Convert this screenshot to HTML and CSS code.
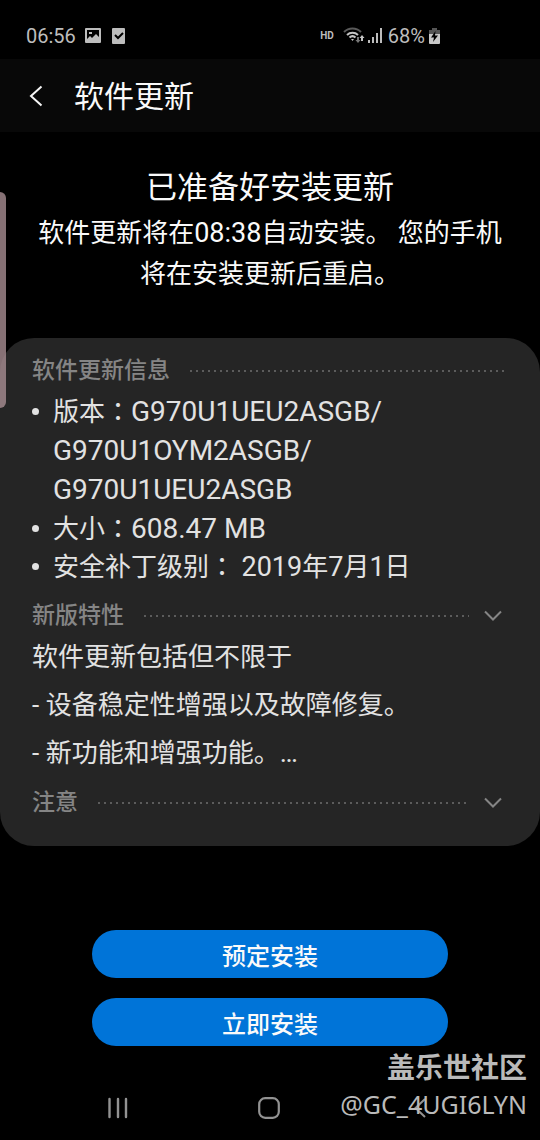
FILE: index.html
```html
<!DOCTYPE html>
<html lang="zh-CN">
<head>
<meta charset="utf-8">
<meta name="viewport" content="width=device-width, initial-scale=1">
<title>软件更新</title>
<link rel="stylesheet" href="styles.css">
</head>
<body>
<div class="screen">
  <div class="status">
    <span class="clock">06:56</span>
    <svg class="s-photo" width="16" height="16" viewBox="0 0 16 16"><path fill="#bdbdbd" fill-rule="evenodd" d="M1 0h14a1 1 0 0 1 1 1v13a1 1 0 0 1-1 1H1a1 1 0 0 1-1-1V1a1 1 0 0 1 1-1zM2 2v9l3-3 2 2 4-4 3 3V2zM4 4h3v2H4z"/></svg>
    <svg class="s-check" width="13" height="16" viewBox="0 0 13 16"><rect width="13" height="16" rx="1" fill="#bdbdbd"/><path d="M3 7l3 3 5-5" fill="none" stroke="#000" stroke-width="2"/></svg>
    <span class="hd">HD</span>
    <svg class="s-wifi" width="22" height="17" viewBox="0 0 22 17"><g fill="none" stroke-width="2"><path stroke="#5a5a5a" d="M1 5a12 12 0 0 1 17 0"/><path stroke="#c4c4c4" d="M4 8a8 8 0 0 1 11 0M6.500 10.500a4.500 4.500 0 0 1 6 0"/></g><path fill="#c4c4c4" d="M8 12h3l-1.500 2zM19 8l2.500 3H20v3h-2v-3h-1.500z"/><path fill="#777" d="M14 10h2v3h1.500L15 16l-2.500-3H14z"/></svg>
    <svg class="s-signal" width="14" height="16" viewBox="0 0 14 16"><path fill="#bdbdbd" d="M0 12h2v3H0zM4 9h2v6H4zM8 5h2v10H8zM12 0h2v15h-2z"/></svg>
    <span class="percent">68%</span>
    <svg class="s-battery" width="11" height="16" viewBox="0 0 11 16"><path fill="#555" d="M3 0h5v2h3v5H0V2h3z"/><path fill="#c8c8c8" d="M0 6h11v9a1 1 0 0 1-1 1H1a1 1 0 0 1-1-1z"/><path fill="#000" d="M6.500 3L2 9.500h3L4 14l5-6.500H6z"/></svg>
  </div>

  <header class="bar">
    <button class="back" type="button" aria-label="返回"><svg width="14" height="22" viewBox="0 0 14 22"><path d="M12.500 1.500L2 11l10.500 9.500" fill="none" stroke="#f5f5f5" stroke-width="2"/></svg></button>
    <h1 class="title">软件更新</h1>
  </header>

  <main class="main">
    <section class="intro">
      <h2 class="headline">已准备好安装更新</h2>
      <p class="lead">软件更新将在<span class="latin">08:38</span>自动安装。 您的手机将在安装更新后重启。</p>
    </section>

    <section class="card">
      <div class="section-head"><h3 class="label">软件更新信息</h3><span class="dots"></span></div>
      <ul class="facts">
        <li class="fact fact-tall">版本<span class="colon" lang="zh-TW">：</span><span class="latin latin-large">G970U1UEU2ASGB/<br>G970U1OYM2ASGB/<br>G970U1UEU2ASGB</span></li>
        <li class="fact">大小<span class="colon" lang="zh-TW">：</span><span class="latin latin-large">608.47 MB</span></li>
        <li class="fact">安全补丁级别<span class="colon" lang="zh-TW">：</span> <span class="latin">2019</span>年<span class="latin">7</span>月<span class="latin">1</span>日</li>
      </ul>
      <div class="section-head"><h3 class="label">新版特性</h3><span class="dots"></span><button class="expand" type="button" aria-label="展开新版特性"><svg width="18" height="12" viewBox="0 0 18 12"><path d="M1 1.500l8 8 8-8" fill="none" stroke="#858585" stroke-width="2"/></svg></button></div>
      <div class="notes">
        <p class="note">软件更新包括但不限于</p>
        <p class="note">- 设备稳定性增强以及故障修复。</p>
        <p class="note">- 新功能和增强功能。<span class="latin">…</span></p>
      </div>
      <div class="section-head"><h3 class="label">注意</h3><span class="dots"></span><button class="expand" type="button" aria-label="展开注意"><svg width="18" height="12" viewBox="0 0 18 12"><path d="M1 1.500l8 8 8-8" fill="none" stroke="#858585" stroke-width="2"/></svg></button></div>
    </section>

    <div class="actions">
      <button class="action" type="button">预定安装</button>
      <button class="action" type="button">立即安装</button>
    </div>
  </main>

  <nav class="nav">
    <button class="nav-btn" type="button" aria-label="最近"><svg width="20" height="22" viewBox="0 0 20 22"><path d="M1.500 2v18M10 2v18M18 2v18" fill="none" stroke="#929292" stroke-width="2.400" stroke-linecap="round"/></svg></button>
    <button class="nav-btn" type="button" aria-label="主屏幕"><svg width="22" height="22" viewBox="0 0 22 22"><rect x="1.200" y="1.200" width="19.600" height="19.600" rx="6" fill="none" stroke="#929292" stroke-width="2.200"/></svg></button>
    <button class="nav-btn" type="button" aria-label="后退"><svg width="12" height="22" viewBox="0 0 12 22"><path d="M11 2L1.500 11 11 20" fill="none" stroke="#929292" stroke-width="2"/></svg></button>
  </nav>

  <div class="edge"></div>
  <div class="watermark">
    <span class="community">盖乐世社区</span>
    <span class="author">@GC_4UGI6LYN</span>
  </div>
</div>
</body>
</html>
```
FILE: styles.css
```css
* { box-sizing: border-box; }
html { background: #000; }
body {
  margin: 0;
  color: #fafafa;
  font-family: Roboto, "Noto Sans CJK SC", sans-serif;
  font-size: 26px;
}
h1, h2, h3, p, ul { margin: 0; padding: 0; font-weight: 400; }
button {
  padding: 0;
  border: 0;
  background: none;
  color: inherit;
  font-family: inherit;
  cursor: pointer;
}
svg { display: block; flex: none; }
.screen {
  position: relative;
  display: flex;
  flex-direction: column;
  min-height: 100vh;
  overflow: hidden;
}
.status {
  display: flex;
  align-items: center;
  height: 59px;
  padding: 12px 100px 0 26px;
  color: #bdbdbd;
  font-size: 20px;
}
.s-photo { margin-left: 9px; }
.s-check { margin-left: 11px; }
.hd { margin-left: auto; font-size: 10px; font-weight: 700; }
.s-wifi { margin-left: 9px; }
.s-signal { margin-left: 3px; }
.percent { margin-left: 6px; }
.s-battery { margin-left: 4px; }
.bar {
  display: flex;
  align-items: center;
  height: 73px;
  padding-left: 29px;
  background: #080808;
}
.back { display: flex; width: 45px; height: 45px; align-items: center; }
.title { padding-top: 2px; font-size: 30px; line-height: 45px; }
.main { flex: 1; }
.intro { padding: 32px 32px 43px; text-align: center; }
.headline { font-size: 31px; line-height: 48px; }
.lead { margin-top: 1px; line-height: 41px; }
.latin { font-size: 27px; line-height: 1; }
.latin-large { font-size: 28px; }
.card {
  padding: 16px 32px 26px;
  border-radius: 34px;
  background: #252525;
  color: #e2e2e2;
}
.section-head { display: flex; align-items: center; height: 34px; }
.label { color: #858585; font-size: 23px; font-weight: 500; line-height: 34px; }
.dots {
  flex: 1;
  height: 2px;
  margin-left: 20px;
  background: repeating-linear-gradient(90deg, #5c5c5c 0 2px, transparent 2px 6px);
}
.expand { display: flex; align-items: center; justify-content: center; width: 30px; height: 30px; margin-left: 9px; }
.facts { padding: 5px 0 13px 21px; list-style: none; }
.fact { position: relative; line-height: 38px; }
.fact-tall { line-height: 39px; }
.fact::before {
  content: "";
  position: absolute;
  top: 15px;
  left: -21px;
  width: 7px;
  height: 7px;
  border-radius: 50%;
  background: #e2e2e2;
}
.colon { font-family: "Noto Sans CJK TC", sans-serif; line-height: 1; }
.notes { padding-bottom: 9px; }
.note { line-height: 48px; }
.actions {
  display: flex;
  flex-direction: column;
  align-items: center;
  gap: 20px;
  padding: 84px 0 20px;
}
.action {
  width: 66%;
  height: 48px;
  border-radius: 24px;
  background: #0074d8;
  font-size: 24px;
  font-weight: 500;
}
.nav {
  display: grid;
  grid-template-columns: repeat(3, 1fr);
  height: 64px;
  padding: 0 44px 0 42px;
}
.nav-btn { display: flex; align-items: center; justify-content: center; }
.edge {
  position: absolute;
  top: 192px;
  left: 0;
  width: 6px;
  height: 216px;
  border-radius: 0 6px 6px 0;
  background: rgba(167, 141, 146, 0.8);
}
.watermark {
  position: absolute;
  right: 13px;
  bottom: 21px;
  display: flex;
  flex-direction: column;
  align-items: flex-end;
  color: #bababa;
  pointer-events: none;
}
.community { font-size: 28px; font-weight: 700; line-height: 40px; }
.author { font-family: "Noto Sans", sans-serif; font-size: 25px; line-height: 30px; }
```
